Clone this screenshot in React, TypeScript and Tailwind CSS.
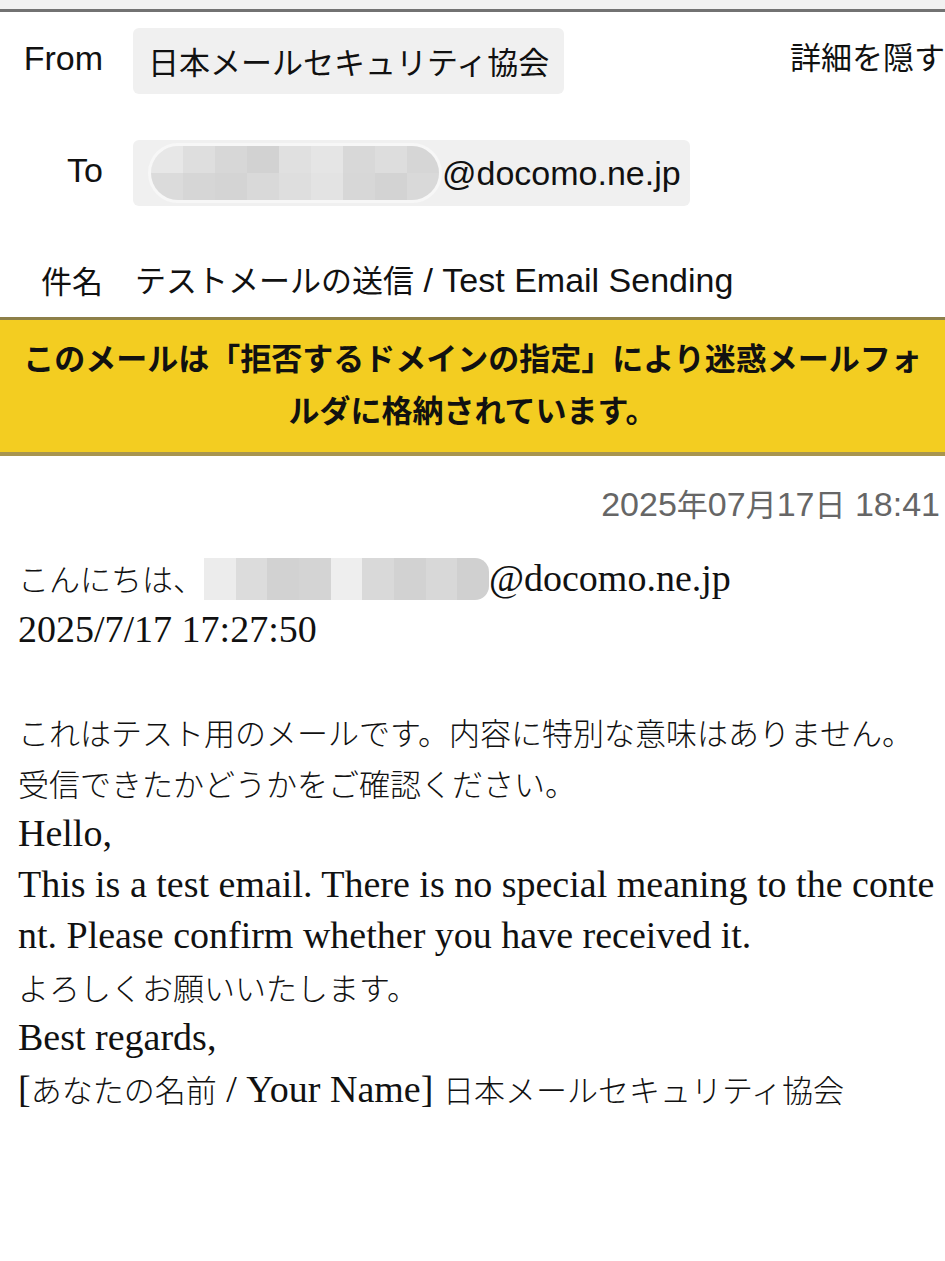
import React from "react";

const CJK_RE = /([\u3000-\u30ff\u3400-\u9fff\uff00-\uffef]+)/;

function Mixed({ text, latin, cjk }: { text: string; latin: string; cjk: string }) {
  const parts = text.split(CJK_RE).filter((p) => p.length > 0);
  return (
    <>
      {parts.map((p, i) => (
        <span key={i} className={CJK_RE.test(p) ? cjk : latin}>
          {p}
        </span>
      ))}
    </>
  );
}

const HL = "font-['Liberation_Sans',sans-serif] text-[34px]";
const HC = "font-['Noto_Sans_CJK_JP',sans-serif] text-[31px]";
const BL = "font-['Liberation_Serif',serif] text-[38px]";
const BC = "font-['Noto_Sans_CJK_JP',sans-serif] text-[31px] font-light";

const toTop = ["#e7e7e7", "#dedede", "#d7d7d7", "#d2d2d2", "#e0e0e0", "#e5e5e5", "#d8d8d8", "#dddddd", "#d6d6d6"];
const toBot = ["#dbdbdb", "#d6d6d6", "#d4d4d4", "#d9d9d9", "#dedede", "#e3e3e3", "#d7d7d7", "#d3d3d3", "#d9d9d9"];
const bodyBlocks = ["#ececec", "#dcdcdc", "#d2d2d2", "#d4d4d4", "#eeeeee", "#d9d9d9", "#d2d2d2", "#d8d8d8", "#d0d0d0"];

function HeaderLabel({ children }: { children: React.ReactNode }) {
  return <div className="w-[103px] shrink-0 text-right">{children}</div>;
}

function BodyLine({ text }: { text: string }) {
  return (
    <div className="h-[51px] leading-[51px] whitespace-nowrap">
      <Mixed text={text} latin={BL} cjk={BC} />
    </div>
  );
}

export default function App() {
  return (
    <div className="min-h-[1261px] w-[945px] overflow-hidden bg-white text-[#111]">
      {/* top strip */}
      <div className="h-[9px] bg-[#f1f1f1]" />
      <div className="h-[3px] bg-[#727272]" />

      {/* From */}
      <div className="mt-[16px] flex h-[66px] items-center">
        <HeaderLabel>
          <span className={`${HL} relative -top-[3px]`}>From</span>
        </HeaderLabel>
        <div className="ml-[30px] flex h-[66px] items-center rounded-[6px] bg-[#f0f0f0] px-[15px]">
          <span className={HC}>日本メールセキュリティ協会</span>
        </div>
        <div className="ml-auto -mt-[10px] whitespace-nowrap">
          <span className={HC}>詳細を隠す</span>
        </div>
      </div>

      {/* To */}
      <div className="mt-[46px] flex h-[66px] items-center">
        <HeaderLabel>
          <span className={`${HL} relative -top-[3px]`}>To</span>
        </HeaderLabel>
        <div className="ml-[30px] flex h-[66px] items-center rounded-[6px] bg-[#f0f0f0] pl-[15px] pr-[9px]">
          <div className="flex h-[60px] w-[294px] flex-col overflow-hidden rounded-full border-[3px] border-[#f7f7f7]">
            <div className="flex h-1/2">
              {toTop.map((c, i) => (
                <div key={i} className="h-full flex-1" style={{ backgroundColor: c }} />
              ))}
            </div>
            <div className="flex h-1/2">
              {toBot.map((c, i) => (
                <div key={i} className="h-full flex-1" style={{ backgroundColor: c }} />
              ))}
            </div>
          </div>
          <span className={HL}>@docomo.ne.jp</span>
        </div>
      </div>

      {/* Subject */}
      <div className="mt-[41px] flex h-[66px] items-center">
        <HeaderLabel>
          <span className={HC}>件名</span>
        </HeaderLabel>
        <div className="ml-[32px] whitespace-nowrap">
          <Mixed text="テストメールの送信 / Test Email Sending" latin={HL} cjk={HC} />
        </div>
      </div>

      {/* Banner */}
      <div className="mt-[4px] border-t-[3px] border-b-[4px] border-t-[#8d7f48] border-b-[#a8954f] bg-[#f3cd21] px-[12px] pt-[11px] pb-[17px] text-center font-['Noto_Sans_CJK_JP',sans-serif] text-[31px] font-bold leading-[52px] text-[#111]">
        このメールは「拒否するドメインの指定」により迷惑メールフォ
        <br />
        ルダに格納されています。
      </div>

      {/* Date */}
      <div className="mt-[21px] pr-[5px] text-right leading-[51px] text-[#666]">
        <Mixed text="2025年07月17日 18:41" latin={HL} cjk={HC} />
      </div>

      {/* Body */}
      <div className="mt-[17px] pl-[18px]">
        <div className="flex h-[51px] items-center whitespace-nowrap">
          <span className={BC}>こんにちは、</span>
          <div className="flex h-[42px] w-[285px] overflow-hidden rounded-r-[14px]">
            {bodyBlocks.map((c, i) => (
              <div key={i} className="h-full flex-1" style={{ backgroundColor: c }} />
            ))}
          </div>
          <span className={BL}>@docomo.ne.jp</span>
        </div>
        <BodyLine text="2025/7/17 17:27:50" />
        <div className="h-[51px]" />
        <BodyLine text="これはテスト用のメールです。内容に特別な意味はありません。" />
        <BodyLine text="受信できたかどうかをご確認ください。" />
        <BodyLine text="Hello," />
        <BodyLine text="This is a test email. There is no special meaning to the conte" />
        <BodyLine text="nt. Please confirm whether you have received it." />
        <BodyLine text="よろしくお願いいたします。" />
        <BodyLine text="Best regards," />
        <BodyLine text="[あなたの名前 / Your Name] 日本メールセキュリティ協会" />
      </div>
    </div>
  );
}
